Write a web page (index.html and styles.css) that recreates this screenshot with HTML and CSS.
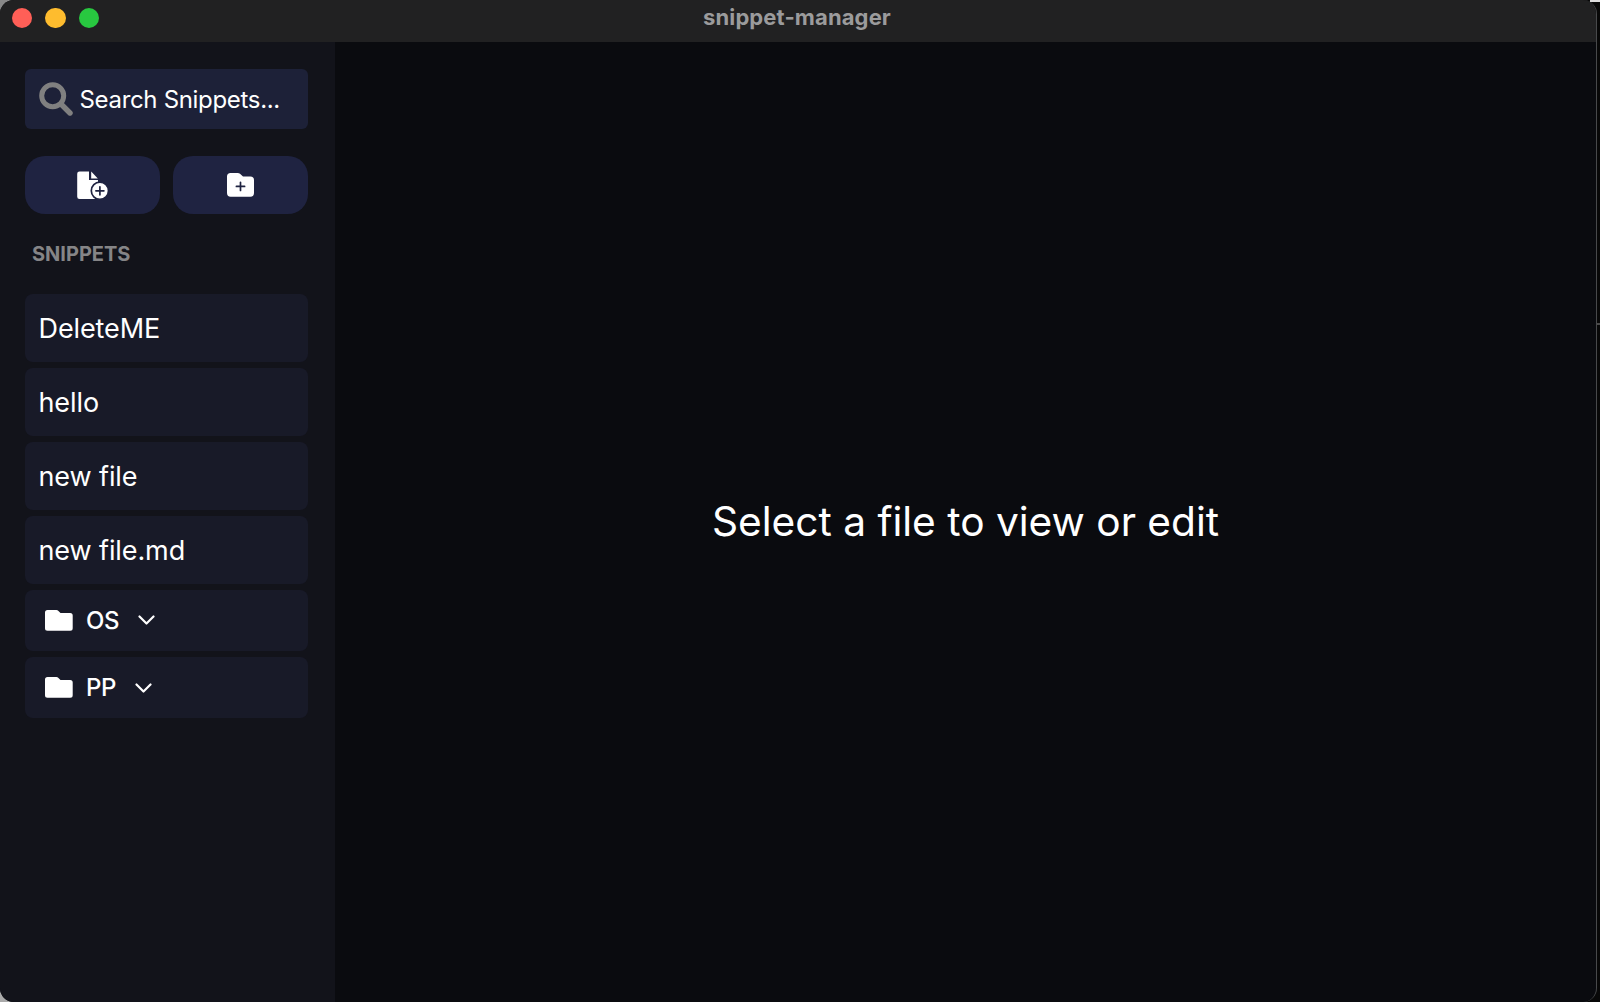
FILE: index.html
```html
<!DOCTYPE html>
<html lang="en">
<head>
<meta charset="utf-8">
<title>snippet-manager</title>
<link rel="stylesheet" href="styles.css">
</head>
<body>
<div class="window">
  <header class="titlebar">
    <div class="lights"><span class="light red"></span><span class="light yellow"></span><span class="light green"></span></div>
    <div class="title"><span>snippet-manager</span></div>
  </header>
  <div class="content">
    <aside class="sidebar">
      <div class="search">
        <svg class="search-icon" viewBox="0 0 34 34"><circle cx="13.7" cy="13.7" r="11" fill="none" stroke="currentColor" stroke-width="5"/><path d="M22 22l9 9" fill="none" stroke="currentColor" stroke-width="5.4" stroke-linecap="round"/></svg>
        <span class="search-text">Search Snippets...</span>
      </div>
      <div class="actions">
        <button class="action" aria-label="New file">
          <svg class="file-icon" viewBox="0 0 32 29"><path d="M2.5.5H12V9h9v19H2.500a2.300 2.300 0 0 1-2.300-2.300V2.800A2.300 2.300 0 0 1 2.500.5z" fill="currentColor"/><path d="M14.200.6L20.800 7.400h-6.600z" fill="currentColor"/><circle cx="22.900" cy="19.800" r="8.600" fill="currentColor" stroke="#1f2341" stroke-width="1.700"/><path d="M22.900 15.800v8M18.900 19.800h8" stroke="#1f2341" stroke-width="1.700" stroke-linecap="round"/></svg>
        </button>
        <button class="action" aria-label="New folder">
          <svg class="folder-plus-icon" viewBox="0 0 27 24"><path d="M3.600 0h7.200q1.300 0 2.200.8l3 2.700h7.400A3.600 3.600 0 0 1 27 7.100v13A3.600 3.600 0 0 1 23.400 23.700H3.600A3.600 3.600 0 0 1 0 20.100V3.600A3.600 3.600 0 0 1 3.600 0z" fill="currentColor"/><path d="M13.500 9.300v8.200M9.400 13.400h8.200" stroke="#1f2341" stroke-width="1.700" stroke-linecap="round"/></svg>
        </button>
      </div>
      <h2 class="heading"><span>SNIPPETS</span></h2>
      <nav class="list">
        <div class="file"><span>DeleteME</span></div>
        <div class="file"><span>hello</span></div>
        <div class="file"><span>new file</span></div>
        <div class="file"><span>new file.md</span></div>
        <div class="folder">
          <svg class="folder-icon" viewBox="0 0 28 21"><path d="M2.500 0h9q1 0 1.700.7l2.300 2.200h9.700a2.500 2.500 0 0 1 2.500 2.500v12.800a2.500 2.500 0 0 1-2.500 2.500H2.500A2.500 2.500 0 0 1 0 18.200V2.500A2.500 2.500 0 0 1 2.500 0z" fill="currentColor"/></svg>
          <span class="name">OS</span>
          <svg class="chevron" viewBox="0 0 17 10"><path d="M1.500 1.500l7 7 7-7" fill="none" stroke="currentColor" stroke-width="2.200" stroke-linecap="round" stroke-linejoin="round"/></svg>
        </div>
        <div class="folder">
          <svg class="folder-icon" viewBox="0 0 28 21"><path d="M2.500 0h9q1 0 1.700.7l2.300 2.200h9.700a2.500 2.500 0 0 1 2.500 2.500v12.800a2.500 2.500 0 0 1-2.500 2.500H2.500A2.500 2.500 0 0 1 0 18.200V2.500A2.500 2.500 0 0 1 2.500 0z" fill="currentColor"/></svg>
          <span class="name">PP</span>
          <svg class="chevron" viewBox="0 0 17 10"><path d="M1.500 1.500l7 7 7-7" fill="none" stroke="currentColor" stroke-width="2.200" stroke-linecap="round" stroke-linejoin="round"/></svg>
        </div>
      </nav>
    </aside>
    <main class="viewer"><p class="empty">Select a file to view or edit</p></main>
  </div>
</div>
</body>
</html>
```
FILE: styles.css
```css
* { box-sizing: border-box; }
body {
  margin: 0;
  height: 1002px;
  overflow: hidden;
  font-family: Inter, sans-serif;
  color: #fff;
  background:
    linear-gradient(#ddd, #ddd) 100% 0 / 10px 2px no-repeat,
    linear-gradient(#4a4a4a, #4a4a4a) 100% 323px / 4px 2px no-repeat,
    linear-gradient(#888, #888) 0 0 / 14px 14px no-repeat,
    linear-gradient(#aaa, #aaa) 0 100% / 14px 14px no-repeat,
    #080808;
}
.window {
  display: flex;
  flex-direction: column;
  width: 1597px;
  height: 1002px;
  border-right: 1.500px solid #48494b;
  border-radius: 14px;
  overflow: hidden;
  background: #0a0b0f;
}
.titlebar {
  display: grid;
  grid-template-columns: 200px 1fr 200px;
  height: 42px;
  background: #212122;
}
.lights { display: flex; gap: 13px; padding: 8px 0 0 12px; }
.light { width: 20.400px; height: 20.400px; border-radius: 50%; }
.red { background: #ff5f57; }
.yellow { background: #febc2e; }
.green { background: #28c840; }
.title {
  padding: 4px 2px 0 0;
  text-align: center;
  font-size: 22px;
  line-height: 27px;
  font-weight: 700;
  letter-spacing: 0.120px;
  color: #9b9b9c;
}
.content { display: flex; flex: 1; }
.sidebar {
  width: 335px;
  padding: 27px 27px 0 25px;
  background: #12131a;
}
.search {
  display: flex;
  align-items: center;
  height: 60px;
  padding-left: 13.500px;
  border-radius: 6px;
  background: #1d2138;
}
.search-icon { width: 34px; height: 34px; color: #808080; }
.search-text {
  margin-left: 7px;
  padding-top: 2px;
  font-size: 24px;
  line-height: 30px;
  letter-spacing: -0.320px;
  white-space: nowrap;
}
.actions { display: flex; gap: 13px; margin-top: 27px; }
.action {
  display: flex;
  align-items: center;
  justify-content: center;
  flex: 1;
  height: 58px;
  padding: 0;
  border: 0;
  border-radius: 20px;
  color: #fff;
  background: #1f2341;
}
.file-icon { width: 32px; height: 29px; }
.folder-plus-icon { width: 27px; height: 24px; }
.heading {
  margin: 27px 0 0 7px;
  font-size: 20px;
  line-height: 26px;
  font-weight: 700;
  color: #858587;
}
.list { display: flex; flex-direction: column; gap: 6.500px; margin-top: 27px; }
.file, .folder { display: flex; align-items: center; border-radius: 8px; background: #181a28; }
.file {
  height: 67.500px;
  padding: 2px 0 0 13.500px;
  font-size: 27px;
  letter-spacing: -0.100px;
}
.folder {
  height: 60.700px;
  padding-left: 20px;
  font-size: 24px;
  font-weight: 500;
  letter-spacing: -0.500px;
}
.folder-icon { width: 28px; height: 21px; }
.name { margin-left: 13px; }
.chevron { width: 17px; height: 10px; margin-left: 19px; }
.viewer { display: flex; flex: 1; align-items: center; justify-content: center; }
.empty { margin: 0; padding-bottom: 2px; font-size: 40.650px; white-space: nowrap; }
```
